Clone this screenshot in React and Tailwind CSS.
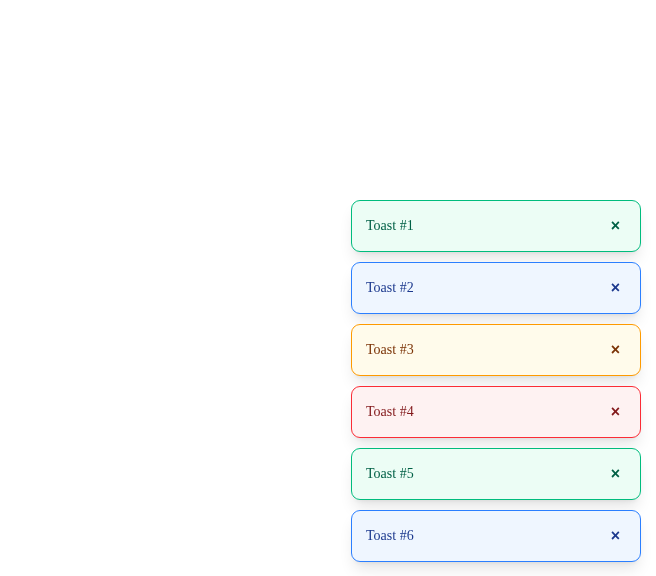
import React from 'react'

const estilos = {
  success: 'border-emerald-500 bg-emerald-50 text-emerald-800',
  info: 'border-blue-500 bg-blue-50 text-blue-900',
  warning: 'border-amber-500 bg-amber-50 text-amber-900',
  error: 'border-red-500 bg-red-50 text-red-900',
}

const toasts = [
  { id: 1, tipo: 'success' },
  { id: 2, tipo: 'info' },
  { id: 3, tipo: 'warning' },
  { id: 4, tipo: 'error' },
  { id: 5, tipo: 'success' },
  { id: 6, tipo: 'info' },
]

function Toast({ id, tipo }) {
  return (
    <div
      className={`flex h-[52px] w-[290px] items-center justify-between rounded-[9px] border pl-[14px] pr-[20px] shadow-lg ${estilos[tipo]}`}
    >
      <span className="text-sm">Toast #{id}</span>
      <button className="font-['Liberation_Sans',sans-serif] text-base font-bold leading-none">×</button>
    </div>
  )
}

export default function App() {
  return (
    <div className="min-h-[576px] bg-white font-['Liberation_Serif',serif]">
      <div className="fixed bottom-[14px] right-[15px] flex flex-col gap-[10px]">
        {toasts.map((t) => (
          <Toast key={t.id} {...t} />
        ))}
      </div>
    </div>
  )
}
